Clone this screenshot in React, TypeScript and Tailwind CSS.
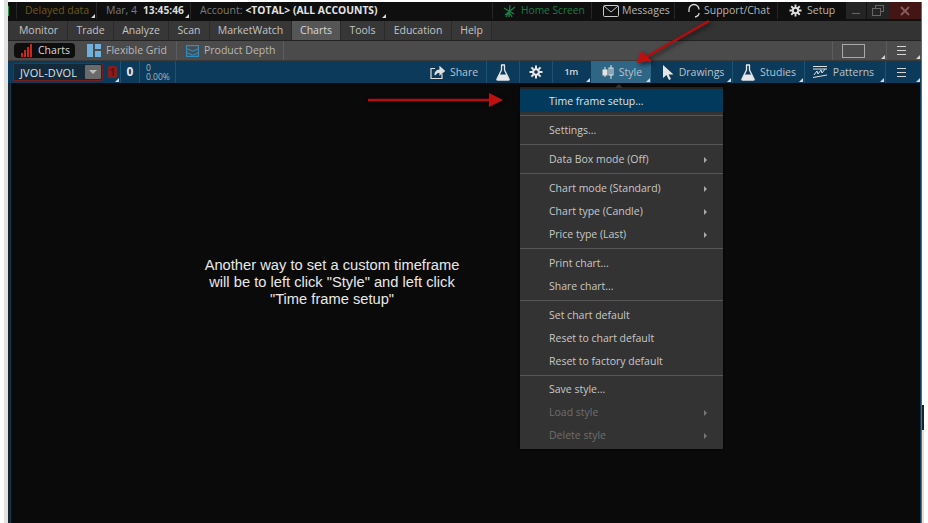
import React from "react";

const Corner = () => (
  <span className="absolute right-[1px] bottom-[1px] w-0 h-0 border-l-[4px] border-l-transparent border-b-[4px] border-b-[#d8d8d8]" />
);

const Flask = () => (
  <svg width="14" height="17" viewBox="0 0 14 17"><path d="M5 1h4M5.500 1v5L1 15c-.3.7 0 1 .7 1h10.600c.7 0 1-.3.7-1L8.500 6V1" fill="none" stroke="#e8e8e8" strokeWidth="1.300" /><path d="M3.500 10.500h7L13 16H1z" fill="#e8e8e8" /></svg>
);

const Gear = ({ c = "#e8e8e8" }: { c?: string }) => (
  <svg width="14" height="14" viewBox="0 0 14 14"><g stroke={c} strokeWidth="2"><path d="M7 .5v13M.500 7h13M2.400 2.400l9.200 9.200M11.600 2.400l-9.200 9.200" /></g><circle cx="7" cy="7" r="3.800" fill={c} /><circle cx="7" cy="7" r="1.800" fill="#0c3150" /></svg>
);

const Tab = ({ w, label, active }: { w: string; label: string; active?: boolean }) => (
  <div className={`${w} h-full flex items-center justify-center border-r border-[#2a2a2a] ${active ? "bg-[#565656] text-[#d8d8d8]" : "bg-[#373737] text-[#c4c4c4]"}`}>{label}</div>
);

const Sep = ({ tight }: { tight?: boolean }) => <div className={`h-px bg-[#565656] mt-[2px] ${tight ? "mb-[2px]" : "mb-[3px]"}`} />;

const Item = ({ label, arrow, dim }: { label: string; arrow?: boolean; dim?: boolean }) => (
  <div className={`h-[23px] pl-[29px] pr-[16px] flex items-center justify-between ${dim ? "text-[#6e6e6e]" : "text-[#c8c8c8]"}`}>
    <span>{label}</span>
    {arrow && <span className={`w-0 h-0 border-y-[3px] border-y-transparent border-l-[3px] ${dim ? "border-l-[#777]" : "border-l-[#aaa]"}`} />}
  </div>
);

const TB = ({ w, children, corner, border = true, active, extra = "" }: { w: string; children: React.ReactNode; corner?: boolean; border?: boolean; active?: boolean; extra?: string }) => (
  <div className={`${w} ${extra} relative h-full flex items-center justify-center gap-[5px] ${border ? "border-r border-[#1c5272]" : ""} ${active ? "bg-[#2f6585]" : ""}`}>
    {children}
    {corner && <Corner />}
  </div>
);

export default function App() {
  return (
    <div className="relative w-[928px] h-[523px] bg-white flex overflow-hidden text-[10.500px] leading-none" style={{ fontFamily: '"Open Sans", "Noto Sans", sans-serif' }}>
      <div className="w-[4px] h-full bg-white" />
      <div className="w-[4px] h-full bg-[#e2e2e2]" />
      <div className="w-[913px] flex flex-col pt-[2px] bg-white">
        {/* title bar */}
        <div className="h-[19px] pb-[2px] bg-[#0f0f0f] flex items-center text-[#a0a0a0] shrink-0">
          <div className="w-px h-[10px] bg-[#1f9a4a]" />
          <div className="ml-[7px] w-[81px] h-full relative flex items-center pl-[8px] border-l border-r border-[#262626] text-[#6e5a12]">Delayed data<Corner /></div>
          <div className="w-[94px] h-full relative flex items-center pl-[9px] border-r border-[#262626] text-[#7c7c7c]">Mar, 4<span className="ml-[6px] font-bold text-[10.200px] text-[#dcdcdc]">13:45:46</span><Corner /></div>
          <div className="w-[196px] h-full relative flex items-center pl-[9px] text-[#7c7c7c]">Account:<span className="ml-[3px] font-bold text-[10.300px] text-[#e4e4e4]">&lt;TOTAL&gt; (ALL ACCOUNTS)</span><Corner /></div>
          <div className="ml-[105px] w-[100px] h-full flex items-center gap-[5px] pl-[10px] border-l border-r border-[#262626] text-[#1c7a44] text-[10.200px]">
            <svg width="13" height="14" viewBox="0 0 13 14" fill="none" stroke="#1c7a44" strokeWidth="1.400"><path d="M7 1 6 13M1 4l10 6M12 3 2 11M3 13l3-5 3 5" /></svg>
            Home Screen
          </div>
          <div className="w-[83px] h-full flex items-center gap-[3px] pl-[11px] border-r border-[#262626] text-[#b4b4b4]">
            <svg width="16" height="12" viewBox="0 0 16 12" fill="none" stroke="#c8c8c8" strokeWidth="1"><rect x=".5" y=".5" width="15" height="11" rx="1" /><path d="m1 1 7 6 7-6" /></svg>
            Messages
          </div>
          <div className="w-[103px] h-full flex items-center gap-[3px] pl-[12px] border-r border-[#262626] text-[#b4b4b4]">
            <svg width="14" height="15" viewBox="0 0 14 15" fill="none" stroke="#d8d8d8" strokeWidth="1.300"><path d="M2 9V6.500a5 5 0 0 1 10 0M8 14c2-.5 4-2 4-4" /></svg>
            Support/Chat
          </div>
          <div className="w-[68px] h-full flex items-center gap-[5px] pl-[11px] text-[#b4b4b4]">
            <svg width="13" height="13" viewBox="0 0 14 14"><g stroke="#e0e0e0" strokeWidth="2"><path d="M7 .5v13M.500 7h13M2.400 2.400l9.200 9.200M11.600 2.400l-9.200 9.200" /></g><circle cx="7" cy="7" r="3.800" fill="#e0e0e0" /><circle cx="7" cy="7" r="1.800" fill="#111" /></svg>
            Setup
          </div>
          <div className="w-[21px] h-full bg-[#242424] flex items-end justify-center pb-[5px] border-r border-[#111]"><div className="w-[8px] h-px bg-[#666]" /></div>
          <div className="w-[22px] h-full bg-[#242424] flex items-center justify-center">
            <svg width="12" height="11" viewBox="0 0 12 11" fill="none" stroke="#666"><rect x="3.500" y=".5" width="8" height="6" /><rect x=".5" y="3.500" width="8" height="7" fill="#242424" /></svg>
          </div>
          <div className="flex-1 h-full bg-[#431515] flex items-center justify-center">
            <svg width="10" height="10" viewBox="0 0 10 10" stroke="#8a5c5c" strokeWidth="1.800"><path d="m1 1 8 8M9 1 1 9" /></svg>
          </div>
        </div>

        {/* menu */}
        <div className="h-[20px] bg-[#333333] flex pl-[2px] border-b border-[#222] shrink-0">
          <Tab w="w-[58px]" label="Monitor" />
          <Tab w="w-[46px]" label="Trade" />
          <Tab w="w-[55px]" label="Analyze" />
          <Tab w="w-[41px]" label="Scan" />
          <Tab w="w-[82px]" label="MarketWatch" />
          <Tab w="w-[49px]" label="Charts" active />
          <Tab w="w-[44px]" label="Tools" />
          <Tab w="w-[67px]" label="Education" />
          <Tab w="w-[40px]" label="Help" />
        </div>

        {/* sub tabs */}
        <div className="h-[19px] bg-[#4b4b4b] flex items-center pl-[2px] text-[#b8b8b8] shrink-0">
          <div className="ml-[4px] w-[61px] h-[15px] rounded-[4px] bg-[#0e0e0e] flex items-center pl-[7px] gap-[5px] text-[#d8d8d8]">
            <svg width="12" height="13" viewBox="0 0 12 13" fill="#c8261e"><rect x="0" y="9" width="2" height="4" /><rect x="3" y="6" width="2" height="7" /><rect x="6" y="3" width="2" height="10" /><rect x="9" y="0" width="2" height="13" /></svg>
            Charts
          </div>
          <div className="w-[102px] h-full flex items-center pl-[12px] gap-[5px] border-r border-[#5c5c5c]">
            <svg width="14" height="13" viewBox="0 0 14 13" fill="#6fb0dc"><rect width="6" height="13" /><rect x="8" width="6" height="5" /><rect x="8" y="7" width="6" height="6" /></svg>
            Flexible Grid
          </div>
          <div className="w-[107px] h-full flex items-center pl-[9px] gap-[5px] border-r border-[#5c5c5c]">
            <svg width="13" height="12" viewBox="0 0 13 12" fill="none" stroke="#2e8cc0" strokeWidth="1.200"><rect x=".6" y=".6" width="11.800" height="10.800" /><path d="M1 4c3 0 4 2 6 2s3-2 5-2M1 8c3 0 4 2 6 2s3-2 5-2" /></svg>
            Product Depth
          </div>
          <div className="ml-auto w-[55px] h-full relative flex items-center pl-[9px] border-l border-r border-[#5c5c5c]"><div className="w-[23px] h-[14px] border border-[#a8a8a8]" /><Corner /></div>
          <div className="w-[34px] h-full relative flex items-center justify-center pr-[5px]">
            <svg width="11" height="9" viewBox="0 0 11 9" stroke="#d4d4d4"><path d="M1 .5h9M1 4.500h9M1 8.500h9" /></svg>
            <Corner />
          </div>
        </div>

        {/* chart toolbar */}
        <div className="h-[23px] bg-[#0c3a5a] flex items-center text-[#b8c4cc] shrink-0 border-t border-[#3a3a3a]">
          <div className="w-[5px]" />
          <div className="w-[90px] h-[18px] border border-[#7a1e1e] rounded-[2px] flex items-center justify-between pl-[6px] pr-[1px] text-[#dce2e6] bg-[#14293a] text-[11px] tracking-[0.1px]">
            JVOL-DVOL
            <div className="w-[16px] h-[14px] bg-[#6a6a6a] rounded-[1px] flex items-center justify-center"><span className="w-0 h-0 border-x-[4px] border-x-transparent border-t-[4px] border-t-[#bdbdbd]" /></div>
          </div>
          <div className="w-[16px] h-full relative flex items-center justify-center border-r border-[#1c5272] ml-[2px]">
            <div className="w-[9px] h-[12px] rounded-[2px] bg-[#8a1c1c] text-[#5e1010] flex items-center justify-center font-bold">1</div>
            <Corner />
          </div>
          <div className="w-[19px] h-full flex items-center justify-center font-bold text-[12px] text-[#e4e8ea] border-r border-[#1c5272]">0</div>
          <div className="w-[36px] h-full flex flex-col justify-center pl-[6px] text-[8.500px] leading-[9px] text-[#aab6be] border-r border-[#1c5272]"><span>0</span><span>0.00%</span></div>
          <div className="ml-auto flex h-full">
            <TB w="w-[61px]" extra="pr-[4px]">
              <svg width="15" height="13" viewBox="0 0 15 13" fill="none" stroke="#e0e0e0" strokeWidth="1.200"><path d="M5 2.500H1v10h11V8" /><path d="M5 9c0-3 2-5 5-5V1l4.500 4L10 8.500V6C8 6 6 7 5 9z" fill="#e0e0e0" /></svg>
              Share
            </TB>
            <TB w="w-[33px]"><Flask /></TB>
            <TB w="w-[33px]"><Gear /></TB>
            <TB w="w-[38px]" corner border={false} extra="pr-[2px]"><span className="text-[#d0d8dc] font-semibold text-[9.500px] tracking-[-0.5px]">1m</span></TB>
            <TB w="w-[60px]" corner border={false} active extra="pl-[2px]">
              <svg width="12" height="14" viewBox="0 0 12 14" fill="none" stroke="#e4e4e4"><path d="M3 2v10M9 0v14" /><rect x="1" y="5" width="4" height="5" fill="#e4e4e4" /><rect x="7" y="3" width="4" height="7" /></svg>
              Style
            </TB>
            <TB w="w-[82px]" corner extra="pl-[4px]">
              <svg width="11" height="15" viewBox="0 0 11 15" fill="#e6e6e6"><path d="M0 0v13l3.500-3 2.500 5 2-1-2.500-4.500H10.500z" /></svg>
              Drawings
            </TB>
            <TB w="w-[72px]" corner><Flask />Studies</TB>
            <TB w="w-[81px]" corner extra="pr-[4px]">
              <svg width="16" height="15" viewBox="0 0 16 15" fill="none" stroke="#e0e0e0"><path d="M1 1.500h14M1 4h14M1 12.500 15 10" /><path d="M2 10l3-4 1 3 3-4 1 3 3-4" /></svg>
              Patterns
            </TB>
            <TB w="w-[35px]" corner border={false} extra="pr-[5px]">
              <svg width="11" height="9" viewBox="0 0 11 9" stroke="#d4d4d4"><path d="M1 .5h9M1 4.500h9M1 8.500h9" /></svg>
            </TB>
          </div>
        </div>

        {/* chart area */}
        <div className="flex-1 flex bg-[#0a0a0a] min-h-0">
          <div className="w-[2px] bg-[#222]" />
          <div className="w-px bg-[#0c3a5a]" />
          <div className="flex-1 pl-[181px] pt-[174px]">
            <p className="w-[280px] text-center text-[14.700px] leading-[17px] text-[#e8e8e8]" style={{ fontFamily: '"Liberation Sans", sans-serif' }}>
              Another way to set a custom timeframe<br />will be to left click "Style" and left click<br />"Time frame setup"
            </p>
          </div>
          <div className="w-px bg-[#0c3a5a]" />
        </div>
      </div>
      <div className="w-px h-full bg-[#8a6a10] mt-[2px]" />
      <div className="flex-1 h-full flex flex-col">
        <div className="h-[405px]" />
        <div className="h-[25px] w-[2px] bg-[#222]" />
        <div className="flex-1 w-[2px] bg-[#e8e0cc]" />
      </div>

      {/* popup menu */}
      <div className="absolute left-[520px] top-[87px] w-[203px] h-[362px] bg-[#333333] border-t-[2px] border-[#222] shadow-[0_0_2px_#000] text-[10.500px]">
        <span className="absolute left-[95px] -top-[5px] w-0 h-0 border-x-[4px] border-x-transparent border-b-[4px] border-b-[#333]" />
        <div className="h-[23px] bg-[#023a5e] pl-[29px] pt-[1px] flex items-center text-[#dde4e8]">Time frame setup...</div>
        <div className="h-px bg-[#565656] mt-[3px] mb-[3px]" />
        <Item label="Settings..." />
        <Sep />
        <Item label="Data Box mode (Off)" arrow />
        <Sep />
        <Item label="Chart mode (Standard)" arrow />
        <Item label="Chart type (Candle)" arrow />
        <Item label="Price type (Last)" arrow />
        <Sep />
        <Item label="Print chart..." />
        <Item label="Share chart..." />
        <Sep />
        <Item label="Set chart default" />
        <Item label="Reset to chart default" />
        <Item label="Reset to factory default" />
        <Sep tight />
        <Item label="Save style..." />
        <Item label="Load style" arrow dim />
        <Item label="Delete style" arrow dim />
      </div>

      {/* annotation arrows */}
      <svg className="absolute left-0 top-0 pointer-events-none drop-shadow-[2px_2px_2px_rgba(0,0,0,0.6)]" width="928" height="523" viewBox="0 0 928 523">
        <path d="M709 21 646 57" stroke="#b50d0d" strokeWidth="2.500" />
        <path d="M637 63 652 61 641 51z" fill="#c00f0f" />
        <path d="M368 100H490" stroke="#b50d0d" strokeWidth="2.500" />
        <path d="M489 93 503 100 489 107z" fill="#c00f0f" />
      </svg>
    </div>
  );
}
